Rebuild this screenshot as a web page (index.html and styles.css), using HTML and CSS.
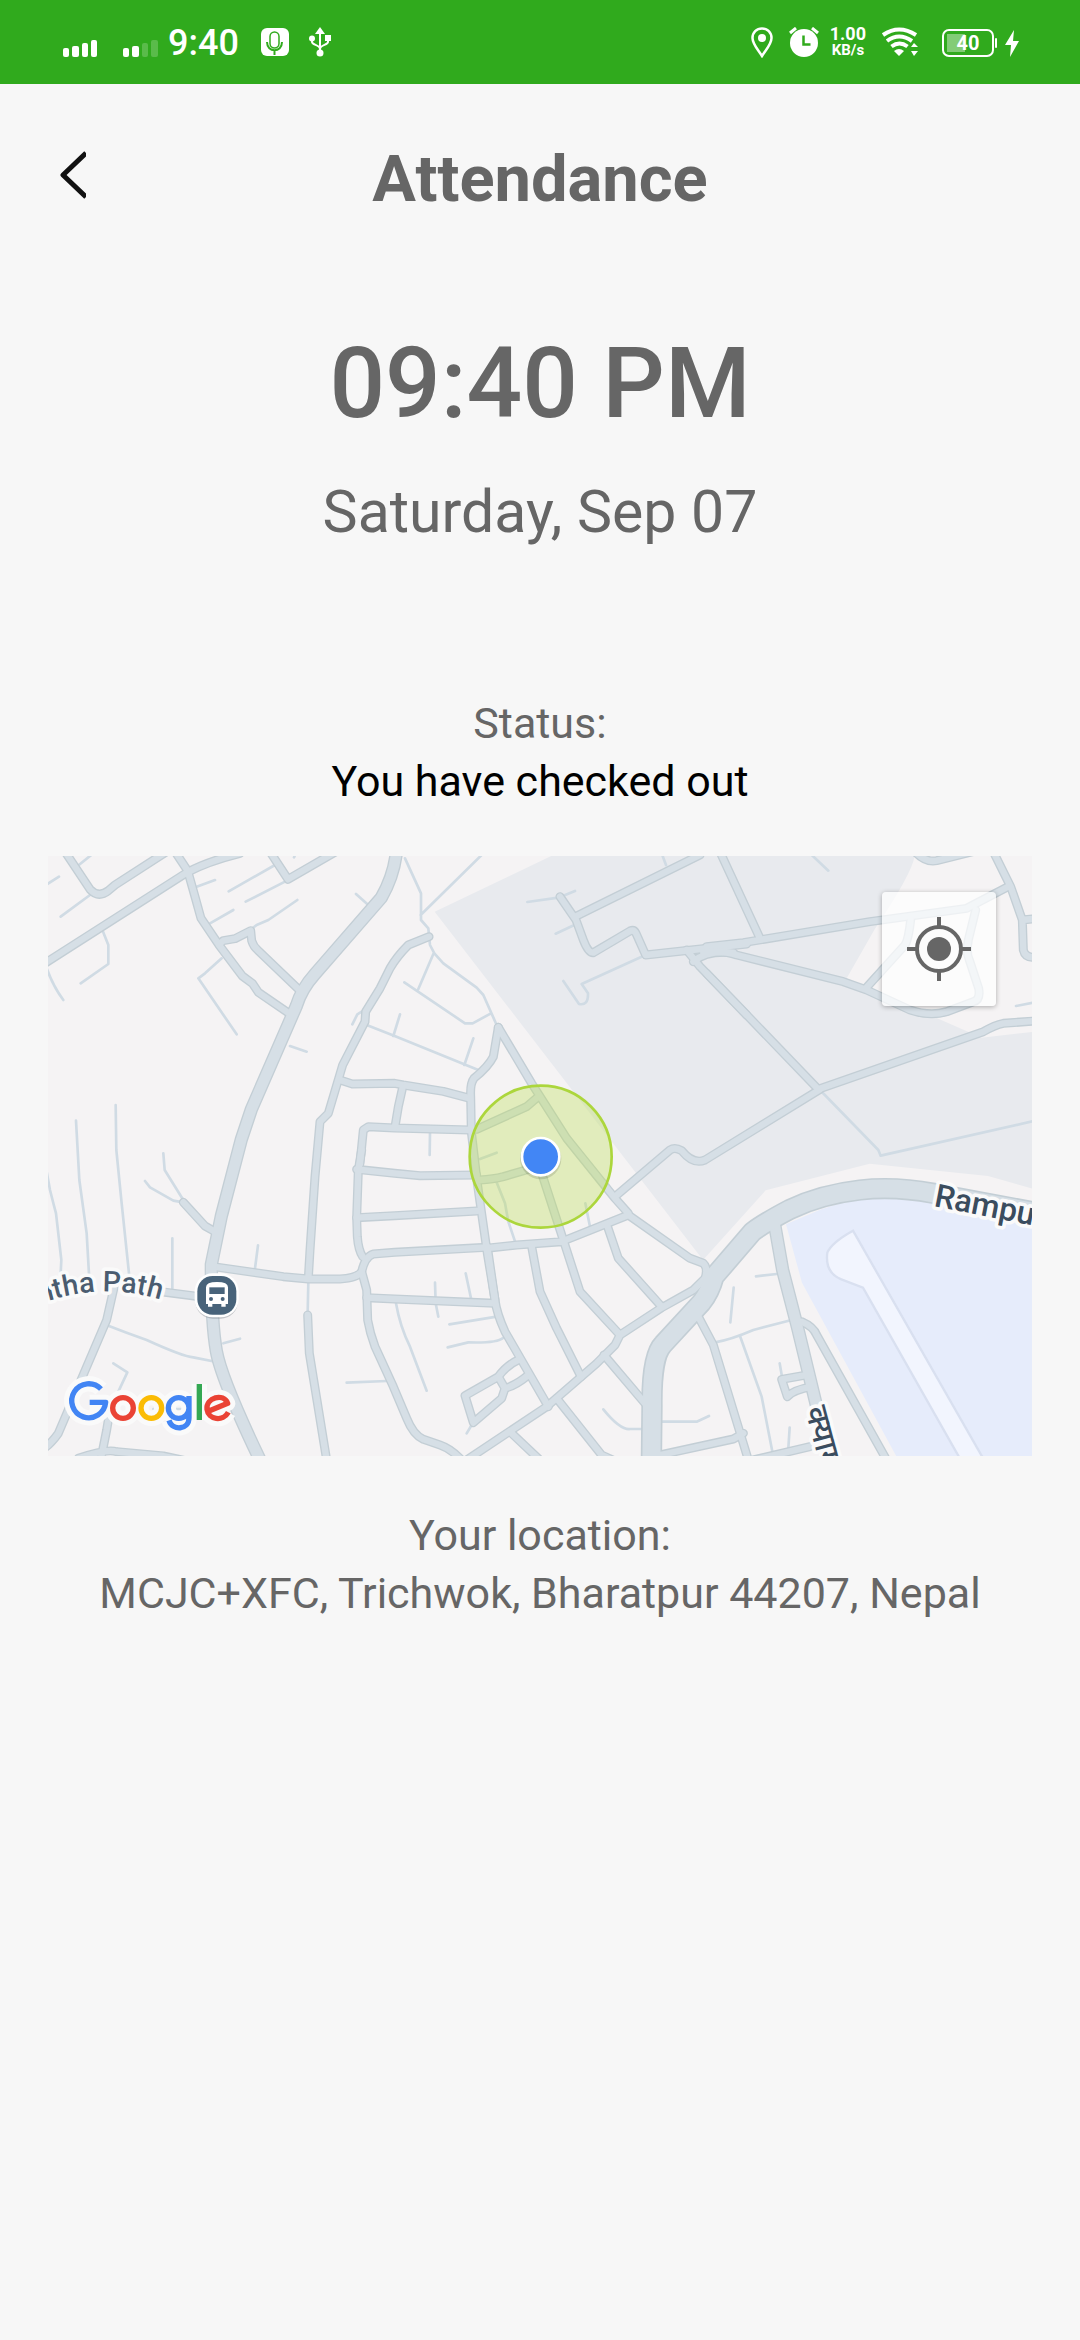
FILE: index.html
```html
<!DOCTYPE html>
<html lang="en">
<head>
<meta charset="utf-8">
<meta name="viewport" content="width=device-width, initial-scale=1">
<title>Attendance</title>
<link rel="stylesheet" href="styles.css">
</head>
<body>
<div class="status-bar">
  <div class="status-side">
    <svg class="signals" width="98" height="32" viewBox="0 0 98 32" fill="#fff" aria-hidden="true">
      <rect x="1" y="22" width="6" height="9" rx="2"/><rect x="10" y="20" width="7" height="11" rx="2"/><rect x="20" y="17" width="6" height="14" rx="2"/><rect x="29" y="14" width="6" height="17" rx="2"/>
      <rect x="61" y="22" width="6" height="9" rx="2"/><rect x="70" y="20" width="7" height="11" rx="2"/>
      <g opacity=".2"><rect x="80" y="17" width="6" height="14" rx="2"/><rect x="89" y="14" width="7" height="17" rx="2"/></g>
    </svg>
    <span class="clock">9:40</span>
    <svg class="mic" width="28" height="28" viewBox="0 0 28 28" aria-hidden="true">
      <rect width="28" height="28" rx="6" fill="#fff"/>
      <rect x="9" y="4" width="9" height="16" rx="4.500" fill="none" stroke="#30aa1d" stroke-width="1.500"/>
      <path d="M6 14c0 11 15 11 15 0M13.500 22v5" fill="none" stroke="#30aa1d" stroke-width="2"/>
    </svg>
    <svg class="usb" width="24" height="32" viewBox="0 0 24 32" fill="none" stroke="#fff" stroke-width="2" aria-hidden="true">
      <path d="M12 6v20M4 12v4c0 3 8 3 8 7M20 11v5c0 3-8 3-8 7"/>
      <path d="M12 1l5 7H7z" fill="#fff" stroke="none"/><circle cx="12" cy="27" r="3.500" fill="#fff" stroke="none"/><circle cx="4" cy="12.500" r="3" fill="#fff" stroke="none"/><path d="M17 9h6v6h-6z" fill="#fff" stroke="none"/>
    </svg>
  </div>
  <div class="status-side">
    <svg class="pin" width="22" height="31" viewBox="0 0 22 31" aria-hidden="true"><path d="M11 1.500C5.500 1.500 1.500 5.500 1.500 11c0 6 5 11 9.500 18 4.500-7 9.500-12 9.500-18 0-5.500-4-9.500-9.500-9.500z" fill="none" stroke="#fff" stroke-width="2.500"/><circle cx="11" cy="11" r="4" fill="#fff"/></svg>
    <svg class="alarm" width="30" height="30" viewBox="0 0 30 30" aria-hidden="true"><circle cx="15" cy="16" r="14" fill="#fff"/><path d="M1 6l6-5M29 6l-6-5" stroke="#fff" stroke-width="3"/><path d="M14.500 8.500v9h7" fill="none" stroke="#30aa1d" stroke-width="2.500"/></svg>
    <span class="net-speed"><span class="net-value">1.00</span><span>KB/s</span></span>
    <svg class="wifi" width="38" height="30" viewBox="0 0 38 30" aria-hidden="true"><g fill="none" stroke="#fff" stroke-width="4"><path d="M2 8q16-11 33 0M6 14q12-9 25 0M10.500 19.500q8-6 16 0"/></g><path d="M13 24q5-4 10 0l-5 5z" fill="#fff"/><path d="M30 20l3-4 4 4zM30 24h7l-4 5z" fill="#fff"/></svg>
    <span class="battery"><span class="battery-text">40</span></span>
    <svg class="bolt" width="14" height="27" viewBox="0 0 14 27" fill="#fff" aria-hidden="true"><path d="M9 0L0 15h6L5 27l9-16H8z"/></svg>
  </div>
</div>

<header class="app-header">
  <button class="back" type="button" aria-label="Back">
    <svg width="26" height="48" viewBox="0 0 26 48" aria-hidden="true"><path d="M26 2L3 24l23 22" fill="none" stroke="#111" stroke-width="5" stroke-linejoin="round"/></svg>
  </button>
  <h1 class="title">Attendance</h1>
</header>

<main class="content">
  <p class="time">09:40 PM</p>
  <p class="date">Saturday, Sep 07</p>
  <section class="note status">
    <h2 class="note-label">Status:</h2>
    <p class="note-strong">You have checked out</p>
  </section>

  <div class="map">
    <svg class="map-canvas" viewBox="0 0 2952 1800" preserveAspectRatio="xMidYMid slice" role="img" aria-label="Map of your location">
      <defs>
        <g id="streets">
          <g transform="translate(-24 -18)">
            <path d="M65-10L150 118Q175 145 205 122L225 105 400-8"/>
            <path d="M10 343L440 68Q500 35 600 10M395-10L443 62 465 140 483 205 537 285 607 378 637 400 655 427 750 492"/>
            <path d="M537 282L550 272 585 266 632 242 635 272Q640 290 655 302L778 420"/>
            <path d="M680-10L744 88 900-2"/>
            <path d="M900 690L937 702 1064 700 1090 705 1210 724 1290 745"/>
            <path d="M960 940L970 840 985 830 1064 834 1290 840"/>
            <path d="M1167 260L1105 285Q1070 320 1050 355L1020 415 977 485 975 515 908 645 865 790 840 815 825 980 810 1200 805 1285"/>
          </g>
          <g transform="translate(996 -18)">
            <path d="M355 532L340 620Q325 650 282 685 270 700 272 740L274 845 292 1000 322 1210 345 1350"/>
            <path d="M68 712L55 770 45 830M355 532L455 700 560 865 705 1045 745 1090M290 838L440 770 475 740"/>
            <path d="M540 140L588 210 610 270Q625 310 640 308L750 243Q762 238 768 250L797 315 1100 282M590 198L960 15"/>
            <path d="M920 300L960 350 1100 495M940 335Q980 300 1060 308"/>
            <path d="M705 1040L870 900Q885 890 905 902 940 945 975 930L1320 718"/>
          </g>
          <g transform="translate(1986 -18)">
            <path d="M-10 290L100 278 480 215 770 175 898 108M25-5L150 265M845-5L902 110 937 210 985 205M937 210L940 300Q945 322 970 322H985"/>
            <path d="M-20 308Q40 300 80 315L400 395 470 420 600 480Q660 500 710 485L790 455Q812 450 806 415L778 330Q768 310 775 270L797 180M470 412L585 285Q595 270 602 210M602-10Q640 40 680 32L800 2"/>
            <path d="M-10 370L325 718 820 545Q855 525 880 520L985 512"/>
          </g>
          <g transform="translate(-24 882)">
            <path d="M430 157L495 228 525 245M520 350L730 380 805 387H900Q950 385 965 365 975 320 1000 312L1064 307 1340 292M1310 183L1064 197 950 203M950 58L1064 70 1140 77 1310 75"/>
            <path d="M965 0L955 60 950 203 952 260Q955 300 968 320M965 365L980 420 983 510Q990 550 1005 590L1060 710 1100 805Q1120 855 1150 868L1200 885Q1230 895 1260 925"/>
            <path d="M803 495L808 610 860 930M225 400L200 510 140 650 55 850Q30 885 5 900M205 810L200 840 185 915M115 925Q200 895 230 905L370 918 450 935M340 422L480 440M980 443L1064 447 1365 460"/>
          </g>
          <g transform="translate(996 882)">
            <path d="M300 90Q340 88 370 80L490 45M485 70L550 270 600 425 720 555M335 293L410 285 545 275 745 195M745 195L930 325 970 340Q985 355 975 385L940 420 845 473 720 555 705 585 650 640 500 770 260 930"/>
            <path d="M682 228L715 325 845 470M455 290L480 425 530 535 603 680M322 290L345 450Q350 490 375 545L505 770M418 628Q380 645 355 680L255 737 280 818 365 745 375 715 355 680M375 715Q410 705 445 675"/>
            <path d="M672 615L795 760M530 745L665 915 720 940M395 850L485 935M955 500L1000 585 1105 930M840 915L1060 867 1090 850"/>
          </g>
          <g transform="translate(1986 882)">
            <path d="M275 515Q310 530 320 555L530 930M300 673L215 688 232 740Q250 720 305 710M130 930L300 890"/>
          </g>
        </g>
        <g id="avenues">
          <path d="M1045-10Q1037 60 1000 125L800 355Q760 400 745 450L610 760 580 850 520 1080 490 1225Q490 1400 505 1485T640 1820"/>
          <path transform="translate(1986 882)" d="M195 230L218 360 262 530 325 790 360 930"/>
        </g>
        <path id="highway" d="M1810 1830L1812 1650Q1810 1500 1845 1465L1960 1340Q1985 1310 1998 1262L2114 1127Q2150 1100 2226 1060 2320 1015 2436 1002 2540 990 2656 1012L2970 1070"/>
        <g id="lanes">
          <g transform="translate(-24 -18)">
            <path d="M110 50L160 10M150 135L62 200M10 110L57 80M188 242L205 285V342L122 400M20 355Q40 410 70 450M470 110L525 90M510 220L580 180M545 325L495 370 475 385 590 553M566 124L705 45M617 155L735 95M637 235L650 225 685 210 772 150M762 22L770 5M948 132L985 165M750 588L800 605M965 485L952 493 937 523M980 525L1064 558 1315 660M108 812L118 990 140 1150 148 1290M227 765L229 900 245 1060 268 1280M370 910L374 960 430 1050"/>
          </g>
          <g transform="translate(996 -18)">
            <path d="M75 25L123 130V210L145 235 150 285 163 310 190 340 290 413 310 435 350 525M310 10L122 195M160 312L115 417M73 397L255 520H278L333 490M60 493L40 558M280 565L253 645M300 927L350 908M150 850L149 915M442 156L535 143 585 123M527 251L583 225M550 393L597 462Q625 468 624 430L605 402 785 320M845 10L858 45M345 985L375 1060 385 1115 407 1180M616 1060L630 1130"/>
          </g>
          <g transform="translate(1986 -18)"><path d="M300 10L355 62M918 468L985 455M330 720L505 900 512 917 985 810"/></g>
          <g transform="translate(-24 882)"><path d="M20 65L30 120Q40 160 48 190L64 330 62 370M315 93L330 112 400 152 430 157M397 265V415M654 286L645 355M805 395L803 490M550 580L600 566M205 527L260 548 320 570Q430 620 460 622L530 636M220 640L262 667 235 725M920 698L1040 693M340 777H590"/></g>
          <g transform="translate(996 882)"><path d="M165 398L167 460 175 500M257 370L273 445M48 460Q60 530 90 590L140 722M208 523L350 500M203 592L265 577Q350 580 370 563M275 825L260 850M670 778Q720 840 750 837H790M840 815H950L987 798"/></g>
          <g transform="translate(1986 882)"><path d="M138 379L200 372M71 413L61 517M15 577Q60 570 130 540L245 510M90 558L155 740 190 920M209 640L216 680M239 833L235 895"/></g>
        </g>
      </defs>
      <rect width="2952" height="1800" class="land"/>
      <path class="campus" d="M1160 167L1520-5H2600Q2600 40 2480 220L2396 367 2743 520 2800 545 2960 527V1000L2820 960 2465 923 2153 1003 1965 1212Z"/>
      <path class="airport" d="M2214 1105L2320 1060Q2550 985 2660 1035L2960 1080V1810H2550L2262 1280Z"/>
      <path class="runway" d="M2415 1124Q2350 1160 2338 1190 2330 1250 2380 1270L2445 1295 2740 1815H2810Z"/>
      <use href="#lanes" class="lane"/>
      <use href="#streets" class="street-edge"/><use href="#avenues" class="avenue-edge"/><use href="#highway" class="highway-edge"/>
      <use href="#streets" class="street"/><use href="#avenues" class="avenue"/><use href="#highway" class="highway"/>
      <circle cx="1478" cy="902" r="213" class="range"/>
      <circle cx="1478" cy="908" r="62" class="me-shadow"/><circle cx="1478" cy="902" r="56" class="me"/>
      <path id="path-label" d="M-260 1400Q-60 1350 0 1335 170 1280 338 1331" fill="none"/>
      <text class="road-name path-name" text-anchor="end"><textPath href="#path-label" startOffset="100%">Kantha Path</textPath></text>
      <g transform="translate(-24 882)">
        <rect x="466" y="376" width="128" height="130" rx="52" fill="#6b6f78" opacity=".35"/>
        <rect x="464" y="370" width="132" height="132" rx="54" fill="#fff"/>
        <rect x="472" y="378" width="117" height="116" rx="46" fill="#48637a"/>
        <path d="M498 412q0-16 33-16t33 16v50h-7v8h-13v-8h-27v8h-13v-8h-6z" fill="#fff"/><path d="M508 412h46v20h-46z" fill="#48637a"/><circle cx="513" cy="447" r="6" fill="#48637a"/><circle cx="548" cy="447" r="6" fill="#48637a"/>
      </g>
      <text class="road-name" transform="translate(2656 1050) rotate(11)">Rampur Road</text>
      <text class="road-name" transform="translate(2271 1660) rotate(75)">क्याम्पस</text>
      <g class="logo" fill="none" stroke-linejoin="round">
        <path class="logo-glow" d="M159 1599A51 51 0 1 0 173 1639H125M256 1656a31 31 0 1 1-62 0 31 31 0 1 1 62 0M341 1656a31 31 0 1 1-62 0 31 31 0 1 1 62 0M423 1656a31 31 0 1 1-62 0 31 31 0 1 1 62 0M423 1620v65c0 38-50 40-60 8M454 1584v108M481 1666l58-24c-12-32-66-18-62 18 4 32 48 38 64 9"/>
        <path d="M159 1599A51 51 0 1 0 173 1639H125" stroke="#4285f4"/>
        <circle cx="225" cy="1656" r="31" stroke="#ea4335"/><circle cx="310" cy="1656" r="31" stroke="#fbbc05"/>
        <path d="M423 1656a31 31 0 1 1-62 0 31 31 0 1 1 62 0M423 1620v65c0 38-50 40-60 8" stroke="#4285f4"/>
        <path d="M454 1584v108" stroke="#34a853"/><path d="M481 1666l58-24c-12-32-66-18-62 18 4 32 48 38 64 9" stroke="#ea4335"/>
      </g>
    </svg>
    <button class="locate" type="button" aria-label="Show my location">
      <svg width="64" height="64" viewBox="0 0 64 64" aria-hidden="true"><circle cx="32" cy="32" r="22" fill="none" stroke="#666" stroke-width="4"/><circle cx="32" cy="32" r="12" fill="#666"/><path d="M32 0v9M32 55v9M0 32h9M55 32h9" stroke="#666" stroke-width="4"/></svg>
    </button>
  </div>

  <section class="note">
    <h2 class="note-label">Your location:</h2>
    <p class="note-text">MCJC+XFC, Trichwok, Bharatpur 44207, Nepal</p>
  </section>
</main>
</body>
</html>
```

FILE: styles.css
```css
* { box-sizing: border-box; }
body {
  margin: 0;
  min-height: 100vh;
  background: #f7f7f7;
  color: #666;
  font-family: Roboto, "Noto Sans", sans-serif;
}
h1, h2, p { margin: 0; font-weight: 400; }
button { padding: 0; border: 0; background: none; cursor: pointer; }
svg { display: block; flex: none; }

.status-bar {
  display: flex;
  justify-content: space-between;
  align-items: center;
  height: 84px;
  padding: 0 61px 0 62px;
  background: #30aa1d;
  color: #fff;
}
.status-side { display: flex; align-items: center; }
.clock { margin: 2px 0 0 8px; font-size: 36px; line-height: 40px; font-weight: 500; }
.mic { margin-left: 22px; }
.usb { margin-left: 19px; }
.alarm { margin-left: 16px; }
.net-speed {
  display: flex;
  flex-direction: column;
  align-items: center;
  margin-left: 11px;
  font-size: 15px;
  line-height: 16px;
  font-weight: 700;
}
.net-value { font-size: 18px; }
.wifi { margin-left: 15px; }
.battery {
  position: relative;
  display: flex;
  align-items: center;
  justify-content: center;
  width: 52px;
  height: 28px;
  margin: 2px 0 0 23px;
  border: 2px solid #fff;
  border-radius: 7px;
  background: linear-gradient(#83cc77, #83cc77) 3px center / 18px 18px no-repeat;
}
.battery::after {
  content: "";
  position: absolute;
  right: -5px;
  top: 7px;
  width: 2px;
  height: 10px;
  border-radius: 1px;
  background: #fff;
}
.battery-text { font-size: 20px; line-height: 24px; font-weight: 700; }
.bolt { margin: 2px 0 0 11px; }

.app-header {
  display: grid;
  grid-template-columns: 60px 1fr 60px;
  align-items: center;
  padding: 56px 48px 0;
}
.back { display: flex; padding: 0 12px 8px; }
.title { font-size: 65px; line-height: 78px; font-weight: 700; text-align: center; }

.content { padding: 107px 48px 48px; text-align: center; }
.time { font-size: 98px; line-height: 118px; font-weight: 500; }
.date { margin-top: 34px; font-size: 59px; line-height: 70px; }
.note { padding-top: 50px; font-size: 43px; line-height: 58px; }
.note.status { padding: 147px 0 46px; }
.note-label { font-size: 43px; }
.note-strong { color: #000; }

.map { position: relative; height: 600px; overflow: hidden; }
.map-canvas { width: 100%; height: 100%; }
.map-canvas use { fill: none; stroke-linecap: round; stroke-linejoin: round; }
.land { fill: #f5f3f4; }
.campus { fill: #e8eaee; }
.airport { fill: #e6ecfb; }
.runway { fill: #f2f5fe; stroke: #d9e0f0; stroke-width: 7px; }
.lane { stroke: #d0dbe4; stroke-width: 8px; }
.street-edge { stroke: #c3ced5; stroke-width: 27px; }
.street { stroke: #d6dfe6; stroke-width: 19px; }
.avenue-edge { stroke: #c3ced5; stroke-width: 40px; }
.avenue { stroke: #d6dfe6; stroke-width: 32px; }
.highway-edge { stroke: #c3ced5; stroke-width: 64px; }
.highway { stroke: #d6dfe6; stroke-width: 54px; }
.range { fill: rgba(188, 223, 78, .34); stroke: #acd63c; stroke-width: 8px; }
.me { fill: #4286f5; stroke: #fff; stroke-width: 8px; }
.me-shadow { fill: rgba(0, 0, 0, .12); }
.road-name {
  font-size: 96px;
  font-weight: 500;
  fill: #3a4c5e;
  stroke: #fafafa;
  stroke-width: 22px;
  stroke-linejoin: round;
  paint-order: stroke;
}
.path-name { font-size: 86px; fill: #4a5c70; }
.logo { stroke-width: 16px; }
.logo-glow { stroke: #fafafa; stroke-width: 46px; }

.locate {
  position: absolute;
  top: 36px;
  right: 36px;
  display: flex;
  align-items: center;
  justify-content: center;
  width: 114px;
  height: 114px;
  border-radius: 4px;
  background: rgba(255, 255, 255, .7);
  box-shadow: 0 1px 5px rgba(0, 0, 0, .3);
}
```
